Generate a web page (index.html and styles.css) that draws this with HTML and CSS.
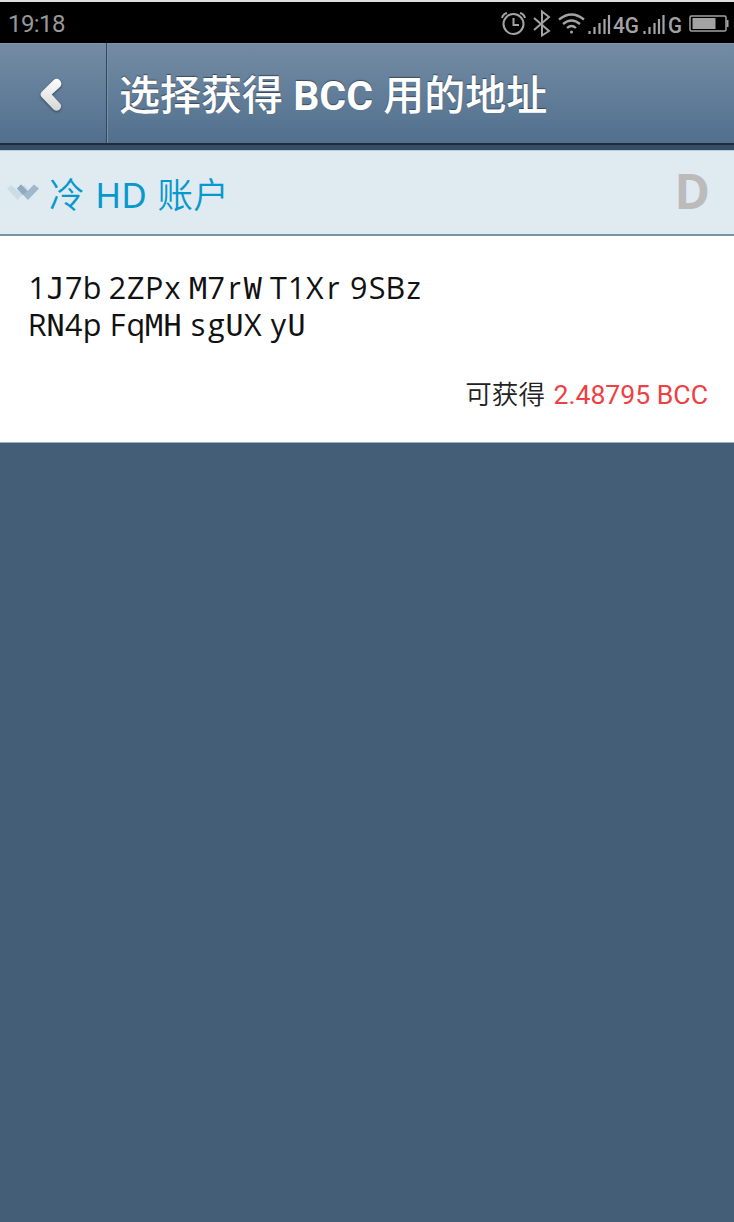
FILE: index.html
```html
<!DOCTYPE html>
<html lang="zh-CN">
<head>
<meta charset="utf-8">
<title>选择获得 BCC 用的地址</title>
<link rel="stylesheet" href="styles.css">
</head>
<body>
<div class="status">
  <span class="time">19:18</span>
  <svg class="status-icons" width="234" height="36" viewBox="0 0 234 36" fill="none" stroke="#a3a3a3">
    <g stroke-width="2"><circle cx="13.500" cy="18" r="10"/><path d="M13.500 12v7h5.500M2 12q1-4 5-5M20 7q4 1 5 5" /></g>
    <path stroke-width="2" d="M34 12L49 25L42 29.500V5.500L49 11L34 24"/>
    <g stroke-width="2.300"><path d="M59 13.500Q71.500 3.500 84 13.500M63 18Q71.500 11 80 18M67 22Q71.500 18 76 22"/><circle cx="71.500" cy="26" r="1.500" fill="#a3a3a3" stroke="none"/></g>
    <path stroke-width="2.200" d="M89.500 25v3M94.500 21v7M99.500 17v11M104.500 13v15M109 9v19M144.500 25v3M149.500 21v7M154.500 17v11M159 13v15M163.500 9v19"/>
    <g class="network"><text x="113" y="26.500" textLength="26" lengthAdjust="spacingAndGlyphs">4G</text><text x="168" y="26.500" textLength="14" lengthAdjust="spacingAndGlyphs">G</text></g>
    <rect x="190" y="10" width="36" height="15" rx="1.500" stroke-width="1.500"/><path d="M192.500 12h23v11h-23z" fill="#a3a3a3" stroke="none"/><path stroke-width="2" d="M227.500 14v7"/>
  </svg>
</div>
<header class="bar">
  <div class="back">
    <svg width="28" height="40" viewBox="0 0 28 40"><defs><linearGradient id="g" x2="0" y2="1"><stop stop-color="#fff"/><stop offset="1" stop-color="#d6d6d6"/></linearGradient></defs><path d="M19.300 4Q17 3 14.700 5L2.500 17Q.5 19.500 2.500 22L14.500 34.500Q17.500 37 20.700 34.500Q23.500 31 21 28.500L12.800 19.500L21.500 11.500Q24 7 19.300 4Z" fill="url(#g)"/></svg>
  </div>
  <h1 class="title">选择获得 <b>BCC</b> 用的地址</h1>
</header>
<section class="group">
  <svg class="chevrons" width="34" height="18" viewBox="0 0 34 18"><path d="M1 4.500L5 1L12 7L18 1L22 4.500L11.500 16Z" fill="#ccdce7"/><path d="M11 4.500L15 .5L21.500 7L28 .5L33 4.500L22 16Z" fill="#9eb8cc"/><path d="M11 4.500L15 .5L21.500 7L17 11Z" fill="#8eabc2"/></svg>
  <h2 class="group-name">冷 <b>HD</b> 账户</h2>
  <span class="badge">D</span>
</section>
<main class="card">
  <div class="address">
    <div class="line"><span class="quad"><i>1</i><i class="mono">J</i><i>7</i><i>b</i></span> <span class="quad"><i>2</i><i>Z</i><i>P</i><i>x</i></span> <span class="quad"><i class="mono">M</i><i>7</i><i>r</i><i class="mono">W</i></span> <span class="quad"><i>T</i><i>1</i><i>X</i><i>r</i></span> <span class="quad"><i>9</i><i>S</i><i>B</i><i>z</i></span></div>
    <div class="line"><span class="quad"><i>R</i><i class="mono">N</i><i>4</i><i>p</i></span> <span class="quad"><i>F</i><i>q</i><i class="mono">M</i><i class="mono">H</i></span> <span class="quad"><i>s</i><i>g</i><i class="mono">U</i><i>X</i></span> <span class="quad"><i>y</i><i class="mono">U</i></span></div>
  </div>
  <div class="amount">可获得 <span class="value">2.48795 BCC</span></div>
</main>
</body>
</html>
```
FILE: styles.css
```css
* { box-sizing: border-box; }
body { margin: 0; min-height: 1222px; background: #455e78; font-family: Roboto, "Noto Sans CJK SC", sans-serif; }
.status { display: flex; align-items: center; justify-content: space-between; height: 43px; padding: 2px 0 0 8px; border-top: 2px solid #dedede; background: #000; color: #989898; }
.time { font-size: 24px; letter-spacing: -.6px; padding-top: 1px; }
.network text { font: 500 22px Roboto, sans-serif; fill: #a3a3a3; stroke: none; }
.bar { display: flex; height: 107px; border-bottom: 5px solid #344e68; background: linear-gradient(#748ca5, #506f8d); box-shadow: inset 0 -2px #202d39, inset 0 1px #8293a7; }
.back { display: flex; align-items: center; width: 107px; height: 100px; padding: 3px 0 0 39px; border-right: 1px solid #34485c; box-shadow: 1px 0 #7890a6; }
.back svg { filter: drop-shadow(0 1px 1px #2c4256); }
.title { margin: 0; padding-left: 12px; color: #fff; font-size: 41px; font-weight: 500; line-height: 107px; white-space: nowrap; text-shadow: 0 -1px 1px #3b4b59; font-family: Roboto, "Noto Sans CJK SC", sans-serif; height: 102px; }
.title b { font-weight: 700; }
.group { display: flex; align-items: center; height: 86px; padding: 0 24px 0 6px; border-top: 1px solid #bdcbd8; border-bottom: 2px solid #7b94aa; background: #e0eaf1; }
.group-name { margin: 0 auto 0 9px; padding-top: 3px; color: #0799cd; font-family: "Noto Sans", "Noto Sans CJK SC", sans-serif; font-size: 35.500px; font-weight: 350; line-height: 78px; letter-spacing: .2px; word-spacing: 1px; }
.group-name b { font-weight: 400; font-size: 35px; }
.badge { color: #bbb; font: 700 48px/80px "Open Sans", sans-serif; margin-top: -3px; }
.card { height: 207px; padding: 33px 26px 0 28px; border-bottom: 1px solid #a2afbc; background: #fff; }
.address { color: #111; font: 30.500px/37px "Open Sans", sans-serif; }
.line { display: flex; height: 37px; }
.quad { display: flex; align-items: baseline; width: 80.400px; }
.quad i { display: flex; justify-content: center; width: 18.300px; font-style: normal; }
.quad .mono { font-family: "DejaVu Sans Mono", monospace; font-size: 30px; }
.amount { margin-top: 32px; color: #222; font-size: 26.600px; font-weight: 350; line-height: 40px; text-align: right; }
.value { margin-left: 2px; color: #ee3f42; font-weight: 400; }
```
